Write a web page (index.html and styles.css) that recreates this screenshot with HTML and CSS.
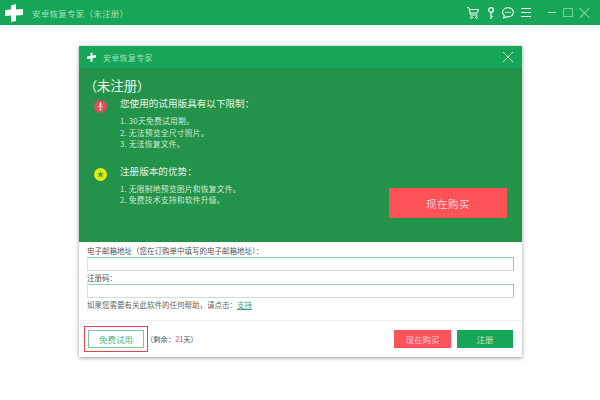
FILE: index.html
```html
<!DOCTYPE html>
<html lang="zh">
<head>
<meta charset="utf-8">
<title>安卓恢复专家</title>
<link rel="stylesheet" href="styles.css">
</head>
<body>
<header class="appbar">
  <svg class="logo" width="18" height="18" viewBox="0 0 18 18"><path d="M6 1.500l5-1.500v5.500l7-.5v6l-7 .5V17l-5 1v-6.500l-6 .5V6l6-.5z" fill="#fff"/></svg>
  <span class="apptitle">安卓恢复专家（未注册）</span>
  <div class="tools">
    <svg class="t-cart" width="12" height="12" viewBox="0 0 12 12" fill="none" stroke="#fff" stroke-width="1"><path d="M0 .7h2l1.500 7.300h7M3 2.500h8.500L10.500 6H3.700"/><circle cx="4.500" cy="10.500" r="1"/><circle cx="9.500" cy="10.500" r="1"/></svg>
    <svg class="t-key" width="6" height="12" viewBox="0 0 6 12" fill="none" stroke="#fff" stroke-width="1.200"><circle cx="3" cy="3" r="2.300"/><path d="M3 5.500V12M3 9.500h2"/></svg>
    <svg class="t-chat" width="12" height="12" viewBox="0 0 12 12" fill="none" stroke="#fff" stroke-width="1.100"><path d="M6 .8C2.800.8.600 2.800.6 5.300c0 1.400.7 2.500 1.600 3.200L1.800 11l2.800-1.300C8.200 10.400 11.400 8.300 11.400 5.300 11.400 2.800 9.200.8 6 .8z"/><path d="M3.300 5.300h1.200M5.400 5.300h1.200M7.500 5.300h1.200" stroke-width="1.200"/></svg>
    <svg class="t-menu" width="10" height="9" viewBox="0 0 10 9" stroke="#fff" stroke-width="1"><path d="M0 .5h10M0 4.500h10M0 8.500h10"/></svg>
    <svg class="t-min" width="8" height="9" viewBox="0 0 8 9" stroke="#c4e9d1"><path d="M0 4.500h8"/></svg>
    <svg class="t-max" width="10" height="9" viewBox="0 0 10 9" fill="none" stroke="#7fd09f"><rect x=".5" y=".5" width="9" height="8"/></svg>
    <svg class="t-close" width="11" height="10" viewBox="0 0 11 10" stroke="#b8e4c8"><path d="M.5 0l10 10M10.500 0L.5 10"/></svg>
  </div>
</header>

<main class="dialog">
  <div class="dlghead">
    <svg width="9" height="10" viewBox="0 0 9 10"><path d="M3.500 1l2-.5v3L9 3v2.500L5.500 6v3.500l-2 .5V6.500L0 7V4.500l3.500-.5z" fill="#fff"/></svg>
    <span class="dlgtitle">安卓恢复专家</span>
    <svg class="dlgclose" width="10" height="10" viewBox="0 0 10 10" stroke="#cfeeda" stroke-width="1"><path d="M0 0l10 10M10 0L0 10"/></svg>
  </div>

  <section class="panel">
    <div class="info">
      <h1 class="status">（未注册）</h1>
      <div class="block">
        <svg class="badge" width="13" height="13" viewBox="0 0 13 13"><circle cx="6.500" cy="6.500" r="6.500" fill="#de4f55"/><path d="M6.500 2.500v4.500M6.500 8.500v2" stroke="#fff" stroke-width="1.500"/><path d="M4 7h5" stroke="#fff" stroke-width=".6"/></svg>
        <div>
          <h2 class="head">您使用的试用版具有以下限制：</h2>
          <ol class="list">
            <li>1. 30天免费试用期。</li>
            <li>2. 无法预览全尺寸照片。</li>
            <li>3. 无法恢复文件。</li>
          </ol>
        </div>
      </div>
      <div class="block second">
        <svg class="badge" width="13" height="13" viewBox="0 0 13 13"><circle cx="6.500" cy="6.500" r="6.500" fill="#e6ea10"/><path d="M6.500 3l1 2.200 2.300.2-1.700 1.600.5 2.400-2.100-1.200-2.100 1.200.5-2.400L3.200 5.400l2.300-.2z" fill="#4da63f"/></svg>
        <div>
          <h2 class="head">注册版本的优势：</h2>
          <ol class="list">
            <li>1. 无限制地预览图片和恢复文件。</li>
            <li>2. 免费技术支持和软件升级。</li>
          </ol>
        </div>
      </div>
    </div>
    <button class="bigbuy">现在购买</button>
  </section>

  <form class="form">
    <label class="lab">电子邮箱地址（您在订购单中填写的电子邮箱地址）：</label>
    <input class="field" type="text">
    <label class="lab">注册码：</label>
    <input class="field" type="text">
    <p class="help">如果您需要有关此软件的任何帮助，请点击：<a class="link">支持</a></p>
  </form>

  <footer class="foot">
    <div class="trialwrap"><button class="trial">免费试用</button></div>
    <span class="remain">（剩余：<b class="days">21</b>天）</span>
    <button class="btn buy">现在购买</button>
    <button class="btn reg">注册</button>
  </footer>
</main>
</body>
</html>
```

FILE: styles.css
```css
* { box-sizing: border-box; }
html, body { margin: 0; height: 100%; background: #fff; overflow: hidden; }
body { font-family: "Noto Sans CJK SC", "Liberation Serif", serif; }

.appbar { height: 25px; background: #17a657; display: flex; align-items: center; padding-left: 5px; color: #a5dfba; }
.logo { flex: none; }
.apptitle { font-size: 8.500px; letter-spacing: .25px; margin-left: 9px; }
.tools { margin-left: auto; display: flex; align-items: center; padding-right: 10px; }
.t-key { margin-left: 9px; }
.t-chat { margin-left: 8px; }
.t-menu { margin-left: 7px; }
.t-min { margin-left: 17px; }
.t-max { margin-left: 7px; }
.t-close { margin-left: 6px; }

.dialog { width: 443px; height: 311px; margin: 21px 0 0 79px; background: #fff; box-shadow: 0 1px 4px rgba(0,0,0,.4); display: flex; flex-direction: column; }
.dlghead { height: 22px; background: #17a657; display: flex; align-items: center; padding: 0 9px 0 8px; flex: none; }
.dlgtitle { font-size: 8px; color: #a5dfba; letter-spacing: .3px; margin-left: 7px; }
.dlgclose { margin-left: auto; }

.panel { height: 174px; background: #24934a; display: flex; justify-content: space-between; flex: none; color: #e6f4ea; padding: 0 15px 24px 9px; }
.status { margin: 8px 0 0 2px; font-size: 13.500px; font-weight: 400; line-height: 19px; font-feature-settings: "palt"; }
.block { display: flex; gap: 13px; margin-top: 1px; padding-left: 6px; }
.block.second { margin-top: 14px; }
.badge { margin-top: 4px; flex: none; }
.head { margin: 0; font-size: 9.600px; font-weight: 400; line-height: 15px; }
.list { list-style: none; margin: 4px 0 0; padding: 0; font-size: 7.800px; line-height: 11.500px; color: #cfe9d6; letter-spacing: .2px; }
.bigbuy { align-self: flex-end; width: 118px; height: 30px; border: 0; background: #fd5257; color: #f9d5d5; font: inherit; font-size: 10.500px; letter-spacing: .5px; padding: 0; }

.form { padding: 3px 8px 0; display: flex; flex-direction: column; flex: none; }
.lab { font-size: 7.500px; line-height: 12px; color: #555; }
.field { height: 14px; width: 100%; border: 1px solid #8fd2ae; border-bottom-color: #cfdcd6; border-left-color: #cfe5d9; background: #fff; margin: 0; padding: 0; border-radius: 0; outline: 0; }
.field + .lab { margin-top: 1px; }
.help { margin: 1px 0 0; font-size: 7.500px; line-height: 11px; color: #666; }
.link { color: #3f9f7a; text-decoration: underline; }

.foot { margin-top: 10px; border-top: 1px solid #eee; flex: 1; display: flex; align-items: center; padding: 0 9px 0 5px; }
.trialwrap { border: 1px solid #e0474c; padding: 3px; width: 64px; height: 26px; display: flex; }
.trial { flex: 1; background: #fff; border: 1px solid #7fc7a0; color: #4fb67d; font: inherit; font-size: 8.500px; padding: 0; }
.remain { font-size: 7.300px; color: #555; margin-left: -2px; }
.days { color: #e0474c; font-weight: 400; }
.btn { border: 0; height: 18px; font: inherit; font-size: 8.500px; padding: 0; }
.buy { width: 57px; margin-left: auto; background: #fb5359; color: #f8cdcf; }
.reg { width: 56px; margin-left: 6px; background: #17a657; color: #bfe8cf; }
```
